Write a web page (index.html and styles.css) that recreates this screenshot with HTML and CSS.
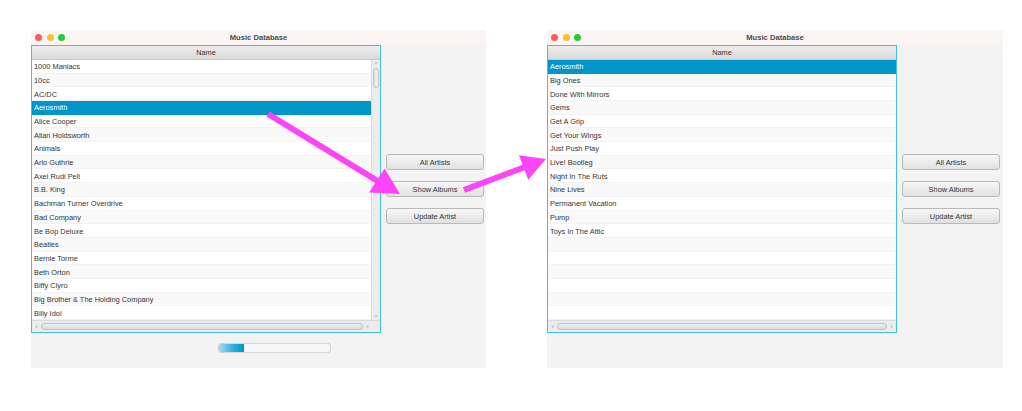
FILE: index.html
```html
<!DOCTYPE html>
<html lang="en">

<head>
    <meta charset="UTF-8">
    <title>Music Database</title>
    <link rel="stylesheet" href="styles.css">
</head>

<body>
    <div class="stage">
        <!-- before: artists list -->
        <div class="window">
            <div class="titlebar">
                <span class="light red"></span>
                <span class="light yellow"></span>
                <span class="light green"></span>
                <span class="title">Music Database</span>
            </div>
            <div class="content">
                <div class="main">
                    <div class="table">
                        <div class="thead">Name</div>
                        <div class="tbody">
                            <div class="rows">
                                <div class="row">1000 Maniacs</div>
                                <div class="row">10cc</div>
                                <div class="row">AC/DC</div>
                                <div class="row selected">Aerosmith</div>
                                <div class="row">Alice Cooper</div>
                                <div class="row">Allan Holdsworth</div>
                                <div class="row">Animals</div>
                                <div class="row">Arlo Guthrie</div>
                                <div class="row">Axel Rudi Pell</div>
                                <div class="row">B.B. King</div>
                                <div class="row">Bachman Turner Overdrive</div>
                                <div class="row">Bad Company</div>
                                <div class="row">Be Bop Deluxe</div>
                                <div class="row">Beatles</div>
                                <div class="row">Bernie Torme</div>
                                <div class="row">Beth Orton</div>
                                <div class="row">Biffy Clyro</div>
                                <div class="row">Big Brother &amp; The Holding Company</div>
                                <div class="row">Billy Idol</div>
                            </div>
                            <div class="vscroll">
                                <span class="arrow">&#8963;</span>
                                <div class="vthumb"></div>
                                <span class="arrow down">&#8964;</span>
                            </div>
                        </div>
                        <div class="hscroll-line">
                            <div class="hscroll">
                                <span class="harrow">&#8249;</span>
                                <div class="hthumb"></div>
                                <span class="harrow">&#8250;</span>
                            </div>
                            <div class="corner"></div>
                        </div>
                    </div>
                    <div class="side">
                        <button class="btn">All Artists</button>
                        <button class="btn">Show Albums</button>
                        <button class="btn">Update Artist</button>
                    </div>
                </div>
                <div class="progress">
                    <div class="progress-fill"></div>
                </div>
            </div>
        </div>

        <!-- after: albums of the selected artist -->
        <div class="window wide">
            <div class="titlebar">
                <span class="light red"></span>
                <span class="light yellow"></span>
                <span class="light green"></span>
                <span class="title">Music Database</span>
            </div>
            <div class="content">
                <div class="main">
                    <div class="table">
                        <div class="thead">Name</div>
                        <div class="tbody">
                            <div class="rows">
                                <div class="row selected">Aerosmith</div>
                                <div class="row">Big Ones</div>
                                <div class="row">Done With Mirrors</div>
                                <div class="row">Gems</div>
                                <div class="row">Get A Grip</div>
                                <div class="row">Get Your Wings</div>
                                <div class="row">Just Push Play</div>
                                <div class="row">Live! Bootleg</div>
                                <div class="row">Night In The Ruts</div>
                                <div class="row">Nine Lives</div>
                                <div class="row">Permanent Vacation</div>
                                <div class="row">Pump</div>
                                <div class="row">Toys In The Attic</div>
                                <div class="row"></div>
                                <div class="row"></div>
                                <div class="row"></div>
                                <div class="row"></div>
                                <div class="row"></div>
                                <div class="row"></div>
                            </div>
                        </div>
                        <div class="hscroll-line">
                            <div class="hscroll">
                                <span class="harrow">&#8249;</span>
                                <div class="hthumb"></div>
                                <span class="harrow">&#8250;</span>
                            </div>
                        </div>
                    </div>
                    <div class="side">
                        <button class="btn">All Artists</button>
                        <button class="btn">Show Albums</button>
                        <button class="btn">Update Artist</button>
                    </div>
                </div>
            </div>
        </div>

        <svg class="arrows" width="1022" height="411" viewBox="0 0 1022 411">
            <polygon points="269.6,111.4 378.4,177.9 384.6,168.4 400,194 369,192.6 375.2,183.1 266.4,116.6" />
            <polygon points="462.9,187.2 522.5,164.7 519,155.3 546,159 528.2,179.7 524.7,170.3 465.1,192.8" />
        </svg>
    </div>
</body>

</html>
```

FILE: styles.css
```css
/* reset */
html,
body {
    margin: 0;
    padding: 0;
    background: #fff;
}

body,
button {
    font-family: 'Liberation Sans', Arial, sans-serif;
    font-size: 7.4px;
    color: #333;
}

/* layout */
.stage {
    position: relative;
    display: flex;
    gap: 61px;
    padding: 30px 0 0 31px;
    width: 1022px;
    height: 411px;
    box-sizing: border-box;
}

.window {
    width: 455px;
    height: 338px;
    background: #f3f3f3;
    display: flex;
    flex-direction: column;
}

.window.wide {
    width: 456px;
}

.titlebar {
    position: relative;
    height: 15px;
    background: #faf5f2;
    display: flex;
    align-items: center;
    padding-left: 4px;
    gap: 4.5px;
}

.light {
    width: 7px;
    height: 7px;
    border-radius: 50%;
}

.red {
    background: #fd5c57;
}

.yellow {
    background: #febc2e;
}

.green {
    background: #29c840;
}

.title {
    position: absolute;
    left: 0;
    right: 0;
    text-align: center;
    font-weight: bold;
    font-size: 7.6px;
    color: #4d4d4d;
}

.main {
    display: flex;
}

/* table */
.table {
    width: 350px;
    height: 288px;
    box-sizing: border-box;
    border: 1px solid #3fc0e8;
    background: #fff;
    display: flex;
    flex-direction: column;
}

.thead {
    height: 14px;
    line-height: 14px;
    text-align: center;
    background: linear-gradient(#ededed, #dadada);
    border-bottom: 1px solid #c9c9c9;
    box-sizing: border-box;
}

.tbody {
    display: flex;
    height: 260px;
}

.rows {
    flex: 1;
    display: grid;
    grid-template-rows: repeat(19, 1fr);
}

.row {
    padding: 1px 0 0 2px;
    display: flex;
    align-items: center;
    border-bottom: 1px solid #f2f2f2;
    white-space: nowrap;
    overflow: hidden;
}

.row:nth-child(even) {
    background: #f9f9f9;
}

.row.selected {
    background: #0096c9;
    color: #fff;
    border-bottom-color: #0096c9;
}

.vscroll {
    width: 9px;
    background: #ececec;
    border-left: 1px solid #dcdcdc;
    box-sizing: border-box;
    display: flex;
    flex-direction: column;
    align-items: center;
}

.arrow {
    height: 7px;
    line-height: 9px;
    font-size: 7px;
    color: #aaa;
}

.arrow.down {
    margin-top: auto;
    line-height: 3px;
}

.vthumb {
    width: 6px;
    height: 20px;
    margin-top: 1px;
    border-radius: 3px;
    background: linear-gradient(90deg, #e2e2e2, #f1f1f1);
    border: 1px solid #c3c3c3;
    box-sizing: border-box;
}

.hscroll-line {
    display: flex;
    height: 12px;
}

.hscroll {
    flex: 1;
    display: flex;
    align-items: center;
    background: #ececec;
    border-top: 1px solid #dcdcdc;
    padding: 0 2px;
    gap: 2px;
}

.harrow {
    font-size: 8px;
    color: #aaa;
    width: 5px;
    text-align: center;
}

.hthumb {
    flex: 1;
    height: 7px;
    border-radius: 3px;
    background: linear-gradient(#f0f0f0, #dcdcdc);
    border: 1px solid #c3c3c3;
    box-sizing: border-box;
}

.corner {
    width: 8px;
    background: #ececec;
    border-top: 1px solid #dcdcdc;
}

/* buttons */
.side {
    display: flex;
    flex-direction: column;
    gap: 11px;
    padding: 109px 0 0 5px;
}

.btn {
    width: 98px;
    height: 16px;
    padding: 0;
    border: 1px solid #b9b9b9;
    border-radius: 3px;
    background: linear-gradient(#f7f7f7, #e1e1e1);
    color: #333;
}

/* progress */
.progress {
    margin: 10px 0 0 187px;
    width: 113px;
    height: 10px;
    box-sizing: border-box;
    border: 1px solid #d3d3d3;
    border-radius: 3px;
    background: #f6f6f6;
    overflow: hidden;
}

.progress-fill {
    width: 25px;
    height: 100%;
    background: linear-gradient(90deg, #9edcf2, #27ace0 60%, #0096c9);
}

/* annotation arrows */
.arrows {
    position: absolute;
    left: 0;
    top: 0;
    pointer-events: none;
}

.arrows polygon {
    fill: #fb45f7;
}
```
